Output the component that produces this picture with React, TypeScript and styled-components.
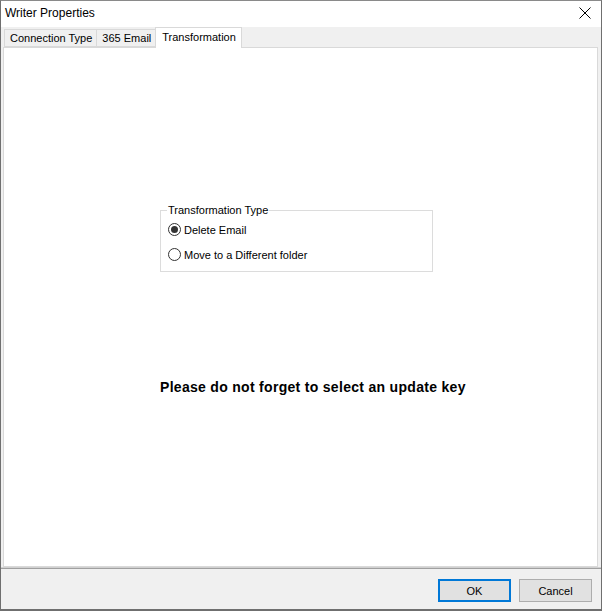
import React from "react";
import styled, { createGlobalStyle } from "styled-components";

const Global = createGlobalStyle`
  html, body { margin: 0; padding: 0; background: #ffffff; }
  body { font-family: "Liberation Sans", Arial, sans-serif; }
  #root { width: 603px; height: 611px; }
`;

const Window = styled.div`
  box-sizing: border-box;
  width: 602px;
  height: 611px;
  display: flex;
  flex-direction: column;
  border-left: 1px solid #6f6f6f;
  border-right: 1px solid #6f6f6f;
  border-top: 1px solid #8a8a8a;
  border-bottom: 2px solid #6f6f6f;
  background: #f0f0f0;
`;

const TitleBar = styled.div`
  height: 26px;
  background: #ffffff;
  display: flex;
  align-items: center;
  justify-content: space-between;
  padding: 0 10px 0 4px;
  flex: none;
`;

const Title = styled.span`
  font-size: 12px;
  color: #000;
  position: relative;
  top: -1px;
`;

const CloseBtn = styled.span`
  width: 12px;
  height: 12px;
  display: flex;
  position: relative;
  top: -1px;
`;

const TabStrip = styled.div`
  height: 20px;
  display: flex;
  align-items: flex-end;
  padding-left: 3px;
  flex: none;
  position: relative;
  z-index: 1;
`;

const Tab = styled.div<{ $active?: boolean }>`
  box-sizing: border-box;
  height: ${(p) => (p.$active ? "21px" : "18px")};
  margin-bottom: ${(p) => (p.$active ? "-1px" : "0")};
  padding: ${(p) => (p.$active ? "0 5px 3px 6px" : "0 4px 0 5px")};
  display: flex;
  align-items: center;
  font-size: 11px;
  color: #000;
  background: ${(p) => (p.$active ? "#ffffff" : "#f0f0f0")};
  border: 1px solid #d9d9d9;
  border-bottom: ${(p) => (p.$active ? "none" : "1px solid #d9d9d9")};
  margin-left: -1px;
  &:first-child { margin-left: 0; }
`;

const Panel = styled.div`
  box-sizing: border-box;
  flex: 1;
  margin: 0 3px 0 2px;
  background: #ffffff;
  border: 1px solid #d9d9d9;
  display: flex;
  flex-direction: column;
  align-items: flex-start;
  padding: 156px 0 0 156px;
`;

const Group = styled.fieldset`
  box-sizing: border-box;
  width: 273px;
  height: 68px;
  margin: 0;
  padding: 0 0 0 7px;
  border: 1px solid #dcdcdc;
  display: flex;
  flex-direction: column;
  gap: 12px;
`;

const Legend = styled.legend`
  font-size: 11px;
  color: #000;
  padding: 0 1px;
  margin-left: -1px;
  line-height: 12px;
`;

const RadioRow = styled.label`
  display: flex;
  align-items: center;
  gap: 3px;
  font-size: 11px;
  color: #000;
  height: 13px;
  &:first-of-type { margin-top: 7px; }
`;

const RadioCircle = styled.span<{ $checked?: boolean }>`
  box-sizing: border-box;
  width: 13px;
  height: 13px;
  border-radius: 50%;
  border: 1px solid #333333;
  background: #ffffff;
  display: flex;
  align-items: center;
  justify-content: center;
  &::after {
    content: "";
    width: 7px;
    height: 7px;
    border-radius: 50%;
    background: ${(p) => (p.$checked ? "#333333" : "transparent")};
  }
`;

const Notice = styled.div`
  margin-top: 107px;
  font-size: 14px;
  letter-spacing: 0.3px;
  font-weight: bold;
  color: #000;
`;

const Footer = styled.div`
  flex: none;
  height: 42px;
  border-top: 1px solid #d0d0d0;
  box-shadow: inset 0 1px 0 #a0a0a0;
  display: flex;
  justify-content: flex-end;
  align-items: flex-start;
  gap: 8px;
  padding: 11px 9px 0 0;
  box-sizing: border-box;
`;

const Button = styled.button<{ $default?: boolean }>`
  box-sizing: border-box;
  width: 73px;
  height: 23px;
  font-family: "Liberation Sans", Arial, sans-serif;
  font-size: 11px;
  color: #000;
  background: #e1e1e1;
  border: ${(p) => (p.$default ? "2px solid #0078d7" : "1px solid #adadad")};
  padding: 0;
  margin: 0;
`;

export default function App() {
  return (
    <>
      <Global />
      <Window>
        <TitleBar>
          <Title>Writer Properties</Title>
          <CloseBtn>
            <svg width="12" height="12" viewBox="0 0 12 12">
              <path d="M0.5 0.5 L11.5 11.5 M11.5 0.5 L0.5 11.5" stroke="#000" strokeWidth="1" fill="none" />
            </svg>
          </CloseBtn>
        </TitleBar>
        <TabStrip>
          <Tab>Connection Type</Tab>
          <Tab>365 Email</Tab>
          <Tab $active>Transformation</Tab>
        </TabStrip>
        <Panel>
          <Group>
            <Legend>Transformation Type</Legend>
            <RadioRow>
              <RadioCircle $checked />
              Delete Email
            </RadioRow>
            <RadioRow>
              <RadioCircle />
              Move to a Different folder
            </RadioRow>
          </Group>
          <Notice>Please do not forget to select an update key</Notice>
        </Panel>
        <Footer>
          <Button $default>OK</Button>
          <Button>Cancel</Button>
        </Footer>
      </Window>
    </>
  );
}
